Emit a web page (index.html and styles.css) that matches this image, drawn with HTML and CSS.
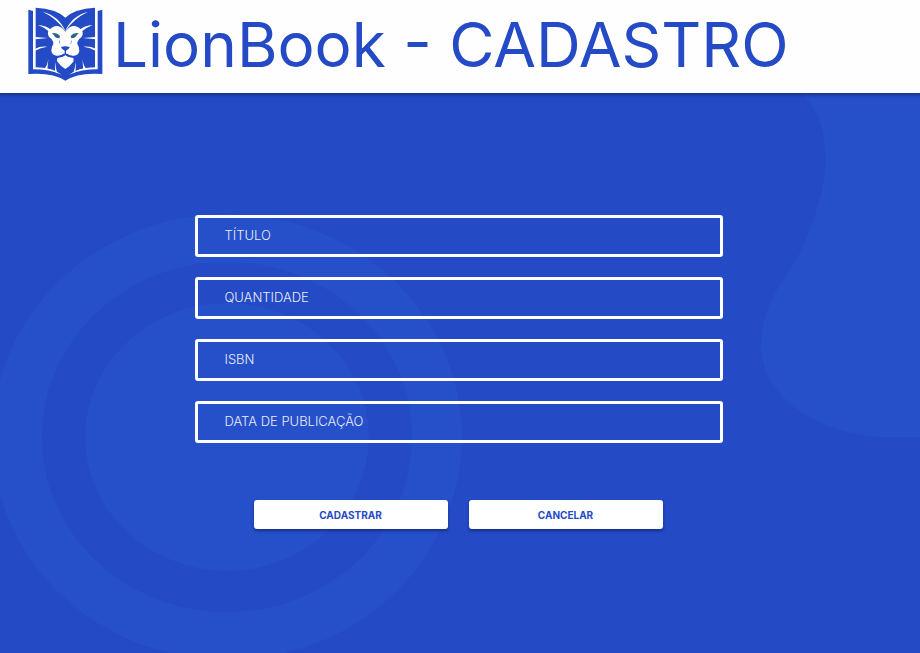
FILE: index.html
```html
<!DOCTYPE html>
<html lang="pt-BR">
<head>
  <meta charset="utf-8">
  <meta name="viewport" content="width=device-width, initial-scale=1">
  <title>LionBook - CADASTRO</title>
  <link rel="stylesheet" href="styles.css">
</head>
<body>
  <header class="header">
    <svg class="logo" viewBox="24 21 225 222" aria-hidden="true">
      <!-- book -->
      <path class="blue" d="M25 29l14 4v170q45-1 71 15l26 4 26-4q26-16 71-15V33l14-4v193q-72-6-111 20-39-26-111-20z"/>
      <path class="blue" d="M47 23q61 3 89 30 28-27 89-30v180q-52 0-76 22h-26q-24-22-76-22z"/>
      <g class="white">
        <!-- mane strands -->
        <path d="M68 35q48 12 69 59-26-38-69-59z"/>
        <path d="M204 35q-48 12-69 59 26-38 69-59z"/>
        <path d="M54 75q25 2 40 15l-5 6q-14-13-35-21z"/>
        <path d="M218 75q-25 2-40 15l5 6q14-13 35-21z"/>
        <path d="M46 111l37 3-37 4zM226 111l-37 3 37 4z"/>
        <path d="M46 146q14-8 36-6-22 3-36 12zM226 146q-14-8-36-6 22 3 36 12z"/>
        <path d="M85 177l-3 32-8-4q8-8 11-28zM187 177l3 32 8-4q-8-8-11-28z"/>
        <path d="M107 186q-2 14 4 30l-6-3q-2-14 2-27zM165 186q2 14-4 30l6-3q2-14-2-27z"/>
        <path d="M39 202q46 0 72 13l14 9q-36-16-86-16zM233 202q-46 0-72 13l-14 9q36-16 86-16z"/>
        <!-- face -->
        <path d="M84 95q10-17 29-17 15 4 23 17 8-13 23-17 19 0 29 17 2 15-10 21-7 9-6 16 7 10 6 21-3 14-16 14-14 1-20-6h-12q-6 7-20 6-13 0-16-14-1-11 6-21 1-7-6-16-12-6-10-21z"/>
        <!-- chin -->
        <path d="M112 174q13-1 24-9 11 8 24 9l1 10q-10 14-25 23-15-9-25-23z"/>
      </g>
      <!-- nose and mouth -->
      <path class="blue" d="M123 141q13-5 26 0-2 7-11 11v9q6 6 16 6v5q-11 0-18-7-7 7-18 7v-5q10 0 16-6v-9q-9-4-11-11z"/>
      <path class="blue" d="M117 119q3 7 4 15-5-7-4-15zM155 119q-3 7-4 15 5-7 4-15z"/>
      <path class="eye" d="M96 100q15-3 24 8l-2 7q-13 0-16-9zM176 100q-15-3-24 8l2 7q13 0 16-9z"/>
    </svg>
    <h1 class="title">LionBook - CADASTRO</h1>
  </header>

  <main class="main">
    <svg class="backdrop" viewBox="0 0 920 560" preserveAspectRatio="none" aria-hidden="true">
      <ellipse class="light" cx="227" cy="344" rx="235" ry="223"/>
      <ellipse class="base" cx="227" cy="344" rx="185" ry="175"/>
      <ellipse class="light" cx="227" cy="344" rx="142" ry="134"/>
      <path class="light" d="M800 0C830 24 830 77 818 110C810 142 797 168 781 190C768 210 761 230 761 253C761 310 830 344 885 344H920V0Z"/>
    </svg>

    <form class="form">
      <div class="fields">
        <input class="field" type="text" placeholder="TÍTULO" aria-label="TÍTULO">
        <input class="field" type="text" placeholder="QUANTIDADE" aria-label="QUANTIDADE">
        <input class="field" type="text" placeholder="ISBN" aria-label="ISBN">
        <input class="field" type="text" placeholder="DATA DE PUBLICAÇÃO" aria-label="DATA DE PUBLICAÇÃO">
      </div>
      <div class="actions">
        <button class="button" type="submit">CADASTRAR</button>
        <button class="button" type="button">CANCELAR</button>
      </div>
    </form>
  </main>
</body>
</html>
```
FILE: styles.css
```css
* {
  box-sizing: border-box;
}

body {
  display: flex;
  flex-direction: column;
  min-height: 100vh;
  margin: 0;
  background: #244ac5;
  font-family: Inter, "Liberation Sans", sans-serif;
}

.header {
  position: relative;
  z-index: 1;
  display: flex;
  align-items: center;
  gap: 10px;
  padding: 3px 28px 8px;
  background: #fefefe;
  box-shadow: 0 1px 3px 1px rgba(20, 30, 90, 0.6);
}

.logo {
  flex: none;
  width: 75px;
  height: 74px;
}

.blue {
  fill: #244ac5;
}

.white {
  fill: #fefefe;
}

.eye {
  fill: #2b6290;
}

.title {
  margin: 0;
  padding-top: 2px;
  color: #244ac5;
  font-size: 62px;
  font-weight: 400;
  line-height: 80px;
  white-space: nowrap;
}

.main {
  position: relative;
  flex: 1;
  padding: 122px 3px 24px 0;
}

.backdrop {
  position: absolute;
  inset: 0;
  width: 100%;
  height: 100%;
}

.light {
  fill: #264fca;
}

.base {
  fill: #244ac5;
}

.form {
  position: relative;
  max-width: 528px;
  margin: 0 auto;
}

.fields {
  display: grid;
  gap: 20px;
}

.field {
  width: 100%;
  height: 42px;
  padding: 0 27px 2px;
  border: 3px solid #fff;
  border-radius: 3px;
  background: transparent;
  color: #fff;
  font-family: inherit;
  font-size: 13px;
  font-weight: 300;
}

.field::placeholder {
  color: #fff;
  opacity: 0.9;
}

.actions {
  display: grid;
  grid-template-columns: 1fr 1fr;
  gap: 21px;
  padding: 57px 60px 0 59px;
}

.button {
  height: 29px;
  padding: 0;
  border: 0;
  border-radius: 3px;
  background: #fff;
  box-shadow: 0 2px 3px rgba(15, 30, 90, 0.6);
  color: #244ac5;
  font-family: inherit;
  font-size: 10px;
  font-weight: 700;
}
```
